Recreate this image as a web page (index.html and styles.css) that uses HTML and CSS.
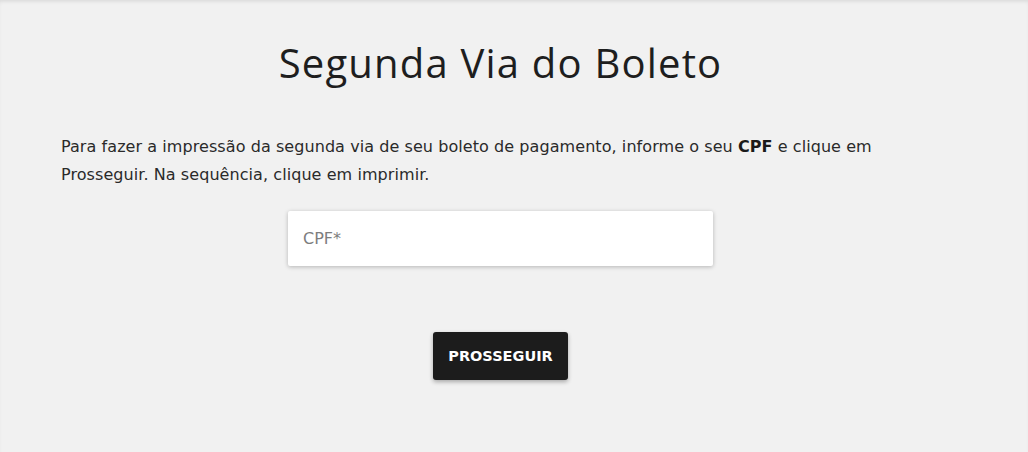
FILE: index.html
```html
<!DOCTYPE html>
<html lang="pt-BR">
<head>
<meta charset="utf-8">
<title>Segunda Via do Boleto</title>
<link rel="stylesheet" href="styles.css">
</head>
<body>
<main class="page">
  <h1 class="title">Segunda Via do Boleto</h1>
  <p class="intro">Para fazer a impressão da segunda via de seu boleto de pagamento, informe o seu <strong>CPF</strong> e clique em Prosseguir. Na sequência, clique em imprimir.</p>
  <form class="form">
    <input class="field" type="text" placeholder="CPF*">
    <button class="btn" type="button">PROSSEGUIR</button>
  </form>
</main>
</body>
</html>
```
FILE: styles.css
```css
html, body {
  margin: 0;
  padding: 0;
  height: 100%;
}
body {
  background: #f1f1f1;
  font-family: "DejaVu Sans", sans-serif;
  color: #222;
  box-shadow: inset 0 3px 4px -2px rgba(0,0,0,0.12);
}
.page {
  width: 879px;
  margin-left: 61px;
  padding-top: 39px;
  display: flex;
  flex-direction: column;
}
.title {
  margin: 0;
  text-align: center;
  font-family: "Open Sans", sans-serif;
  font-weight: 400;
  font-size: 40px;
  line-height: 48px;
  letter-spacing: 1.2px;
  color: #1e1e1e;
}
.intro {
  margin: 46px 0 0 0;
  font-size: 16px;
  line-height: 28px;
  letter-spacing: 0.07px;
  color: #2a2a2a;
}
.intro strong {
  font-weight: 700;
  color: #1a1a1a;
}
.form {
  margin-top: 22px;
  display: flex;
  flex-direction: column;
  align-items: center;
}
.field {
  width: 425px;
  height: 55px;
  box-sizing: border-box;
  border: none;
  border-radius: 2px;
  background: #fff;
  box-shadow: 0 1px 4px rgba(0,0,0,0.25);
  padding: 0 15px;
  font-family: inherit;
  font-size: 16px;
  color: #222;
  outline: none;
}
.field::placeholder {
  color: #7d7d7d;
}
.btn {
  margin-top: 66px;
  width: 135px;
  height: 48px;
  border: none;
  border-radius: 3px;
  background: #1c1c1c;
  color: #fff;
  font-family: inherit;
  font-weight: 700;
  font-size: 14.5px;
  box-shadow: 0 2px 4px rgba(0,0,0,0.3);
  cursor: pointer;
}
```
